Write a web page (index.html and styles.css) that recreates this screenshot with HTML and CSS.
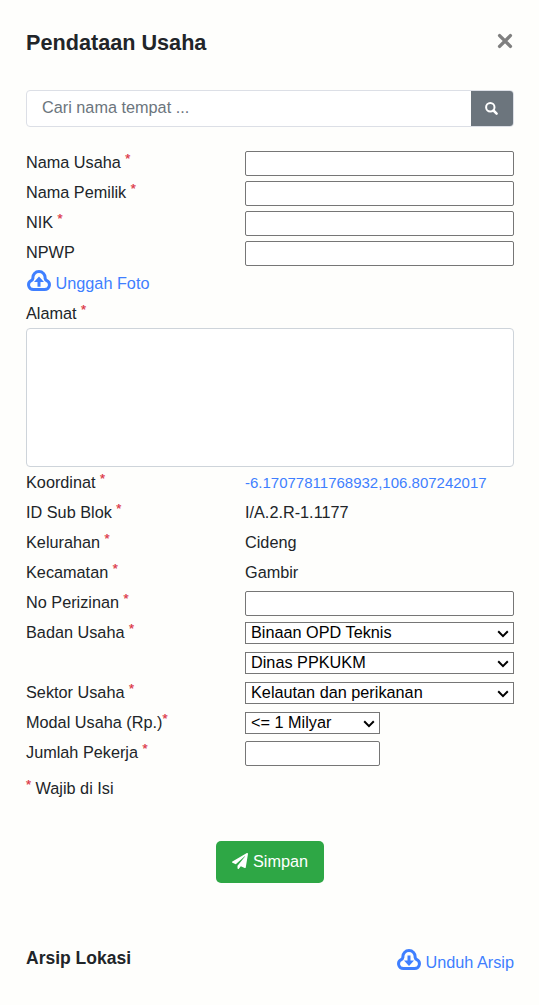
FILE: index.html
```html
<!DOCTYPE html>
<html lang="id">
<head>
<meta charset="utf-8">
<title>Pendataan Usaha</title>
<link rel="stylesheet" href="styles.css">
</head>
<body>
<main class="panel">
  <header class="header">
    <h1 class="title">Pendataan Usaha</h1>
    <button class="close" type="button" aria-label="Tutup"><svg width="16" height="16" viewBox="0 0 16 16"><path d="M2.6 2.6 13.4 13.4M13.4 2.6 2.6 13.4" fill="none" stroke="#7f7f7f" stroke-width="3.4" stroke-linecap="round"/></svg></button>
  </header>

  <div class="search">
    <input class="search-input" type="text" placeholder="Cari nama tempat ...">
    <button class="search-button" type="button" aria-label="Cari"><svg width="13" height="13" viewBox="0 0 13 13"><circle cx="5.3" cy="5.3" r="4.2" fill="none" stroke="#fff" stroke-width="2"/><path d="M8.5 8.5 11.6 11.6" stroke="#fff" stroke-width="2.5" stroke-linecap="round"/></svg></button>
  </div>

  <form class="form">
    <div class="row"><label>Nama Usaha <sup>*</sup></label><input class="field" type="text"></div>
    <div class="row"><label>Nama Pemilik <sup>*</sup></label><input class="field" type="text"></div>
    <div class="row"><label>NIK <sup>*</sup></label><input class="field" type="text"></div>
    <div class="row"><label>NPWP</label><input class="field" type="text"></div>
    <a class="link upload"><svg width="24" height="22" viewBox="0 0 24 22"><path d="M6.3 19.6A4.7 4.7 0 0 1 4.2 10.7C5.2 10.2 5.7 9.4 5.9 8.2A6.12 6.12 0 1 1 18.1 8.2C18.3 9.4 18.8 10.2 19.8 10.7A4.7 4.7 0 0 1 17.7 19.6Z" fill="none" stroke="currentColor" stroke-width="3" stroke-linejoin="round"/><path d="M12 6.5 17 12H13.5V16.7H10.5V12H7Z" fill="currentColor"/></svg><span>Unggah Foto</span></a>
    <div class="row"><label class="address">Alamat <sup>*</sup></label></div>
    <textarea class="area"></textarea>
    <div class="row"><label>Koordinat <sup>*</sup></label><a class="link coords">-6.17077811768932,106.807242017</a></div>
    <div class="row"><label>ID Sub Blok <sup>*</sup></label><span class="value">I/A.2.R-1.1177</span></div>
    <div class="row"><label>Kelurahan <sup>*</sup></label><span class="value">Cideng</span></div>
    <div class="row"><label>Kecamatan <sup>*</sup></label><span class="value">Gambir</span></div>
    <div class="row"><label>No Perizinan <sup>*</sup></label><input class="field" type="text"></div>
    <div class="row"><label>Badan Usaha <sup>*</sup></label><div class="select"><select><option>Binaan OPD Teknis</option></select><svg width="12" height="8" viewBox="0 0 12 8"><path d="M1.2 1.3 6 6.1 10.8 1.3"/></svg></div></div>
    <div class="row"><span></span><div class="select"><select><option>Dinas PPKUKM</option></select><svg width="12" height="8" viewBox="0 0 12 8"><path d="M1.2 1.3 6 6.1 10.8 1.3"/></svg></div></div>
    <div class="row"><label>Sektor Usaha <sup>*</sup></label><div class="select"><select><option>Kelautan dan perikanan</option></select><svg width="12" height="8" viewBox="0 0 12 8"><path d="M1.2 1.3 6 6.1 10.8 1.3"/></svg></div></div>
    <div class="row"><label>Modal Usaha (Rp.)<sup>*</sup></label><div class="select half"><select><option>&lt;= 1 Milyar</option></select><svg width="12" height="8" viewBox="0 0 12 8"><path d="M1.2 1.3 6 6.1 10.8 1.3"/></svg></div></div>
    <div class="row"><label>Jumlah Pekerja <sup>*</sup></label><input class="field half" type="text"></div>
    <p class="note"><sup>*</sup> Wajib di Isi</p>
    <button class="save" type="button"><svg width="16" height="16" viewBox="0 0 512 512"><path fill="#fff" d="M476 3.2L12.5 270.6c-18.1 10.4-15.8 35.6 2.2 43.2L121 358.4l287.3-253.2c5.5-4.9 13.3 2.6 8.6 8.3L176 407v80.5c0 23.6 28.5 32.9 42.5 15.8L282 426l124.6 52.2c14.2 6 30.4-2.9 33-18.2l72-432C515 7.8 493.3-6.8 476 3.2z"/></svg><span>Simpan</span></button>
  </form>

  <footer class="footer">
    <h2 class="subtitle">Arsip Lokasi</h2>
    <a class="link download"><svg width="24" height="22" viewBox="0 0 24 22"><path d="M6.3 19.6A4.7 4.7 0 0 1 4.2 10.7C5.2 10.2 5.7 9.4 5.9 8.2A6.12 6.12 0 1 1 18.1 8.2C18.3 9.4 18.8 10.2 19.8 10.7A4.7 4.7 0 0 1 17.7 19.6Z" fill="none" stroke="currentColor" stroke-width="3" stroke-linejoin="round"/><path d="M12 16.9 17 11.5H13.5V6.5H10.5V11.5H7Z" fill="currentColor"/></svg><span>Unduh Arsip</span></a>
  </footer>
</main>
</body>
</html>
```
FILE: styles.css
```css
* { box-sizing: border-box; }
body {
  margin: 0;
  background: #fefefc;
  color: #212529;
  font: 16.25px/24px "Liberation Sans", Arial, sans-serif;
}
input, select, textarea, button { font: inherit; margin: 0; }
.panel { padding: 25px 25px 0 26px; }
.header { display: flex; justify-content: space-between; height: 65px; }
.title { margin: 0; font-size: 21.65px; line-height: 36px; font-weight: 700; }
.close { display: flex; align-items: flex-start; border: 0; background: none; padding: 8px 1px 0 0; }
.search {
  display: flex;
  height: 37px;
  border: 1px solid #dcdfe6;
  border-radius: 4px;
  overflow: hidden;
  background: #fff;
}
.search-input { flex: 1; min-width: 0; border: 0; background: none; padding: 0 15px 3px; color: #495057; }
.search-input::placeholder { color: #6c757d; opacity: 1; }
.search-button { display: flex; align-items: center; justify-content: center; width: 42px; border: 0; padding: 0 1px 1px 0; background: #6c757d; }
.form { display: flex; flex-direction: column; margin-top: 21px; }
.row { display: grid; grid-template-columns: 219px 1fr; align-items: center; height: 30px; }
.row label, .value { padding-bottom: 2px; }
.row .address { padding-bottom: 0; }
sup { color: #dc3545; font-size: 13px; line-height: 0; vertical-align: 5px; -webkit-text-stroke: 0.25px #dc3545; }
.field { width: 100%; height: 25px; border: 1px solid #767676; border-radius: 2px; background: #fff; }
.select { display: grid; grid-template-columns: 1fr 12px; align-items: center; width: 100%; height: 22px; padding-right: 4px; border: 1px solid #767676; background: #fff; }
.select select { grid-area: 1 / 1 / 2 / 3; appearance: none; width: 100%; height: 20px; border: 0; border-radius: 0; background: none; color: #000; padding: 0 16px 1px 5px; line-height: 19px; }
.select svg { grid-area: 1 / 2; margin-top: 1px; pointer-events: none; }
.select path { fill: none; stroke: #000; stroke-width: 2; }
.field.half, .select.half { width: 135px; }
.link { color: #3f7fff; text-decoration: none; }
.upload, .download { display: flex; align-items: flex-start; gap: 4.5px; }
.upload svg, .download svg { margin-top: 1.5px; }
.upload { height: 30px; padding: 0 0 0 1px; }
.upload span, .download span { padding-top: 3px; }
.area { display: block; height: 139px; margin-bottom: 1px; border: 1px solid #ced4da; border-radius: 4px; background: #fff; resize: none; }
.coords { font-size: 15px; }
.note { margin: 8px 0 1px; }
.save {
  display: flex;
  align-items: center;
  justify-content: center;
  gap: 5px;
  align-self: center;
  width: 108px;
  height: 42px;
  margin-top: 40px;
  border: 0;
  border-radius: 5px;
  background: #2ea745;
  color: #fff;
  padding: 0 0 2px;
}
.footer { display: flex; justify-content: space-between; align-items: flex-start; margin-top: 65px; }
.subtitle { margin: 0; font-size: 17.5px; line-height: 20px; font-weight: 700; }
.download { margin-top: -1px; }
```
